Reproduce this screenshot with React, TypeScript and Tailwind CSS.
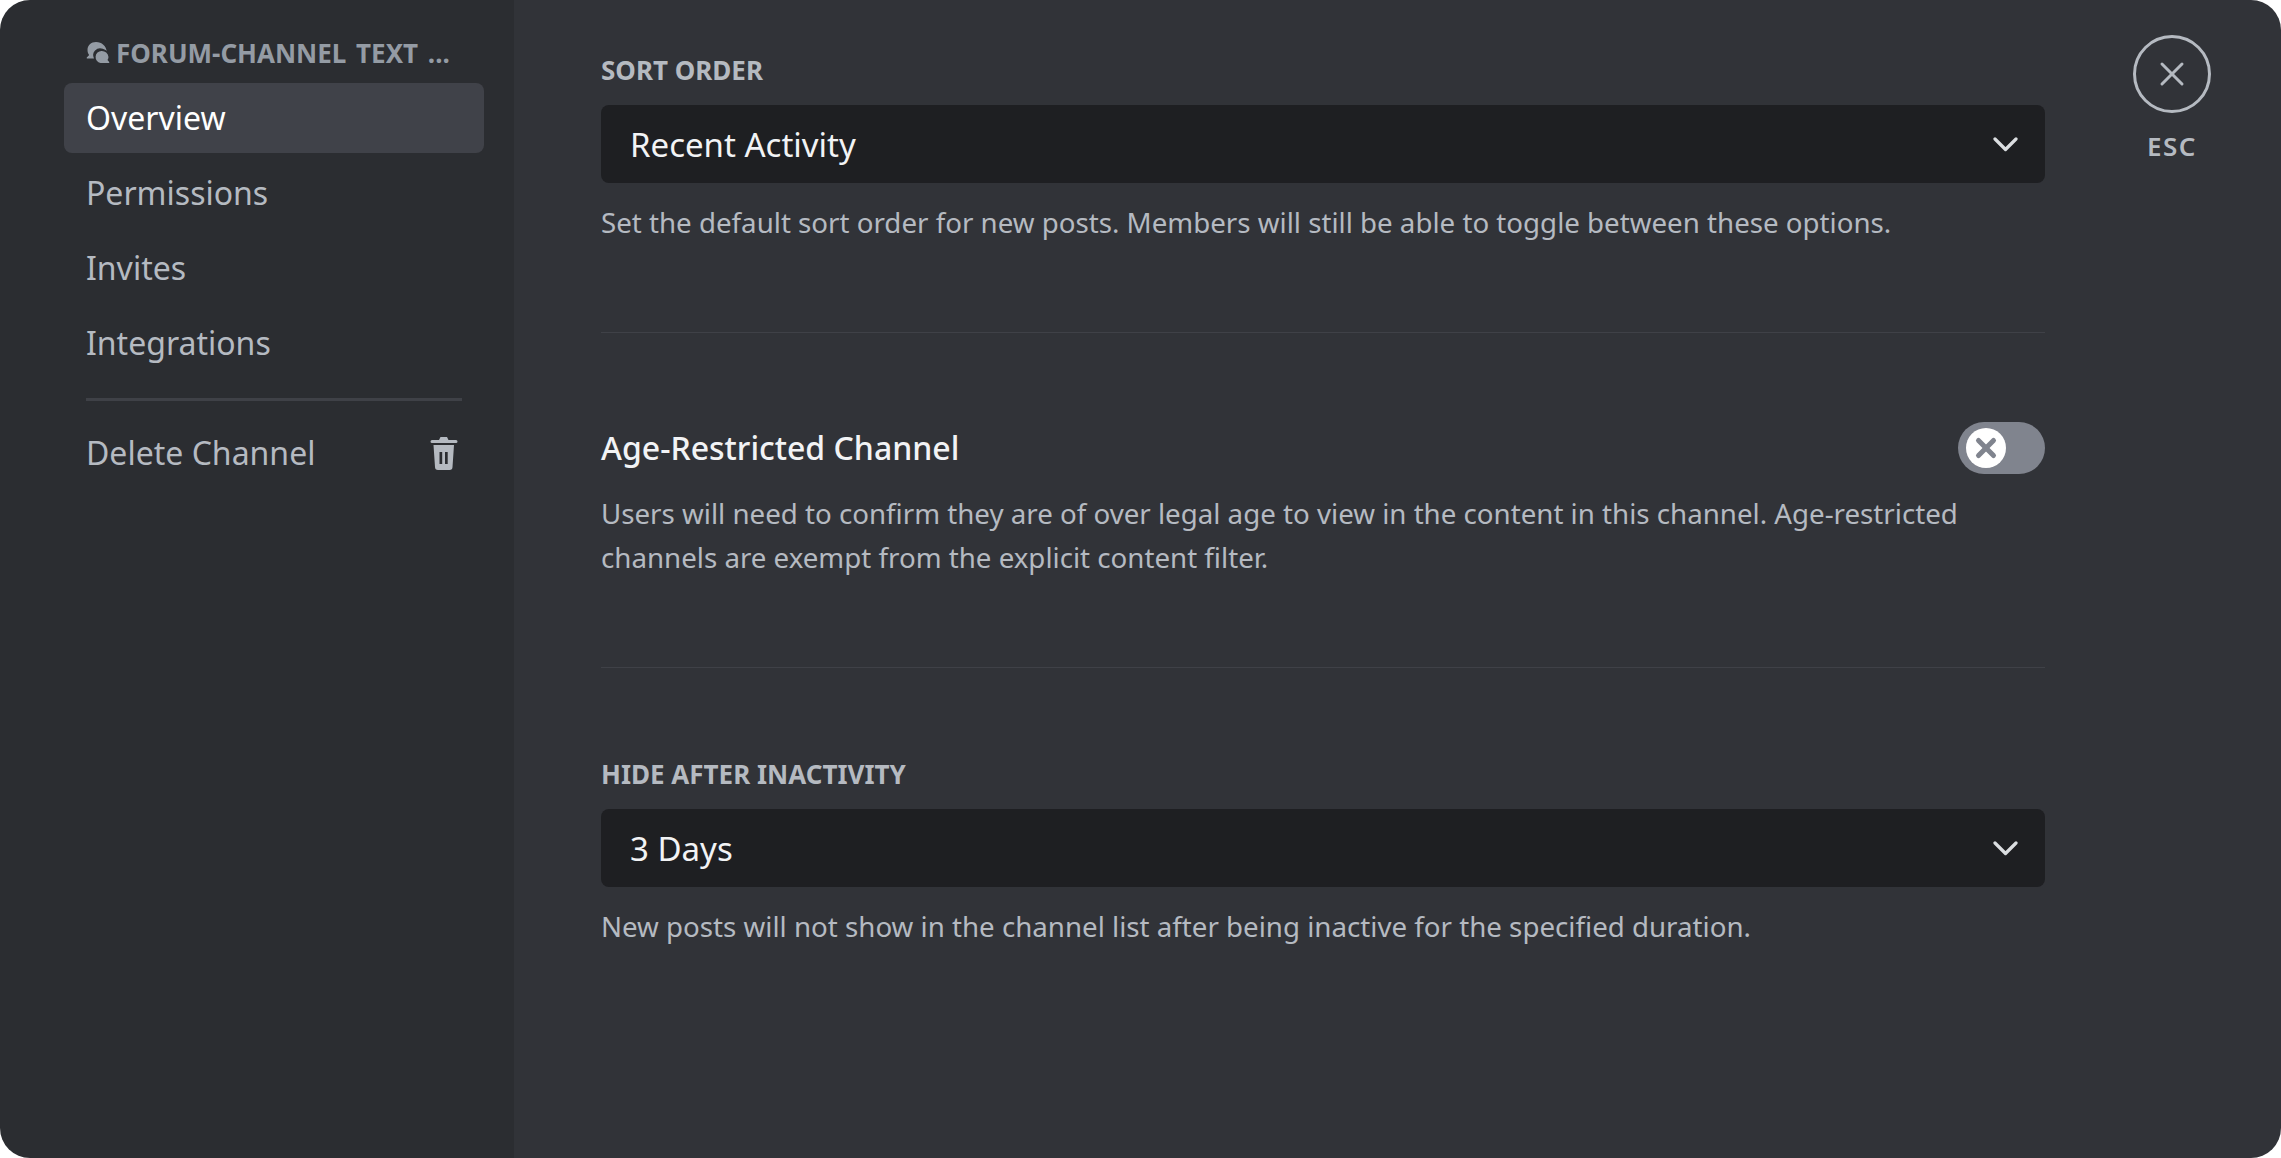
import React from "react";
import { X } from "lucide-react";

const navItems = ["Overview", "Permissions", "Invites", "Integrations"];

const SelectField = ({ label, value, help }: { label: string; value: string; help: string }) => {
  return (
    <div>
      <h2 className="mb-[23px] h-[24px] text-[26px] leading-[24px] font-bold uppercase text-[#b5bac1]">
        {label}
      </h2>
      <div className="flex h-[78px] items-center justify-between rounded-[8px] bg-[#1e1f22] pl-[29px] pr-[26px]">
        <span className="pt-[2px] text-[33px] text-[#f2f3f5]">{value}</span>
        <svg width="26" height="16" viewBox="0 0 26 16" fill="none" className="text-[#dbdee1]">
          <path d="M2 3l10.500 10.500L23 3" stroke="currentColor" strokeWidth="3.200" strokeLinecap="round" strokeLinejoin="round" />
        </svg>
      </div>
      <p className="mt-[22px] text-[27.7px] leading-[34px] whitespace-nowrap text-[#b5bac1]">{help}</p>
    </div>
  );
};

export default function App() {
  return (
    <div className="h-[1158px] w-[2281px] bg-white font-['Noto_Sans',sans-serif]">
      <div className="flex h-full overflow-hidden rounded-[30px]">
        {/* Sidebar */}
        <aside className="w-[514px] shrink-0 bg-[#2b2d31] pl-[64px] pr-[30px] pt-[38px]">
          <div className="flex h-[30px] items-center gap-[6px] pl-[22px]">
            <svg width="24" height="24" viewBox="0 0 24 24" className="shrink-0 text-[#949ba4]" fill="currentColor">
              <path d="M10 1C5 1 1.500 4.500 1.500 9c0 2 .6 3.600 1.700 5L.8 16.500c-.3.4 0 1 .5 1H8a7 7 0 0 1 8.800-9.700c1.600.4 3 1.300 3.900 2.300C20 5 16 1 10 1Z" />
              <path d="M15.500 10a6 6 0 0 0-1 11.900c.6.1 1.200.1 1.800 0h6.400c.5 0 .8-.6.5-1l-1.700-1.900c.6-1 1-2 1-3A6.700 6.700 0 0 0 15.500 10Z" />
            </svg>
            <span className="whitespace-nowrap text-[26px] leading-[30px] font-bold uppercase [word-spacing:3px] text-[#949ba4]">
              Forum-channel Text ...
            </span>
          </div>
          <nav className="mt-[15px] flex flex-col gap-[5px]">
            {navItems.map((item, i) => (
              <div
                key={item}
                className={
                  i === 0
                    ? "flex h-[70px] items-center rounded-[8px] bg-[#404249] px-[22px] text-[32px] text-white"
                    : "flex h-[70px] items-center rounded-[8px] px-[22px] text-[32px] text-[#b5bac1]"
                }
              >
                {item}
              </div>
            ))}
          </nav>
          <div className="mx-[22px] mt-[20px] h-[3px] bg-[#3f4147]" />
          <div className="mt-[17px] flex h-[70px] items-center justify-between pl-[22px] pr-[26px] text-[32px] text-[#b5bac1]">
            <span>Delete Channel</span>
            <svg width="28" height="34" viewBox="0 0 28 34" fill="currentColor" className="mt-[2px]">
              <path d="M10.500 0h6.500l1.500 3H26a1.200 1.200 0 0 1 0 3H2a1.200 1.200 0 0 1 0-3h7Z" />
              <path fillRule="evenodd" d="M3.500 8h20.500l-1.500 22a3 3 0 0 1-3 3H8a3 3 0 0 1-3-3ZM9.500 15v12h2.700V15Zm5.500 0v12h2.700V15Z" />
            </svg>
          </div>
        </aside>

        {/* Content */}
        <main className="flex min-w-0 flex-1 bg-[#313338]">
          <div className="ml-[87px] w-[1444px] pt-[58px]">
            <SelectField
              label="Sort Order"
              value="Recent Activity"
              help="Set the default sort order for new posts. Members will still be able to toggle between these options."
            />
            <div className="mt-[93px] h-[1px] bg-[#3f4147]" />
            <div className="mt-[89px] flex h-[52px] items-center justify-between">
              <h3 className="text-[32px] font-medium text-[#f2f3f5]">Age-Restricted Channel</h3>
              <div className="flex h-[52px] w-[87px] items-center rounded-full bg-[#80848e] pl-[8px]">
                <div className="flex h-[40px] w-[40px] items-center justify-center rounded-full bg-white">
                  <X size={30} strokeWidth={4} className="text-[#80848e]" />
                </div>
              </div>
            </div>
            <p className="mt-[17px] text-[27.7px] leading-[44px] text-[#b5bac1]">
              Users will need to confirm they are of over legal age to view in the content in this channel. Age-restricted
              channels are exempt from the explicit content filter.
            </p>
            <div className="mt-[88px] mb-[94px] h-[1px] bg-[#3f4147]" />
            <SelectField
              label="Hide After Inactivity"
              value="3 Days"
              help="New posts will not show in the channel list after being inactive for the specified duration."
            />
          </div>
          <div className="ml-[88px] flex w-[78px] flex-col items-center pt-[35px]">
            <div className="flex h-[78px] w-[78px] items-center justify-center rounded-full border-[3px] border-[#b5bac1] text-[#b5bac1]">
              <X size={40} strokeWidth={1.8} />
            </div>
            <span className="mt-[19px] text-[26px] leading-[28px] font-semibold tracking-[1.500px] text-[#b5bac1]">ESC</span>
          </div>
        </main>
      </div>
    </div>
  );
}
